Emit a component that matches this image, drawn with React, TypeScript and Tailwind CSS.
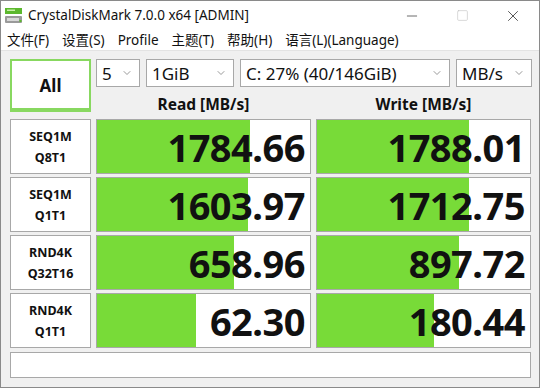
import { ChevronDown, Minus, Square, X } from "lucide-react";

const rows = [
  { a: "SEQ1M", b: "Q8T1", read: "1784.66", rw: 153, write: "1788.01", ww: 152 },
  { a: "SEQ1M", b: "Q1T1", read: "1603.97", rw: 151, write: "1712.75", ww: 152 },
  { a: "RND4K", b: "Q32T16", read: "658.96", rw: 137, write: "897.72", ww: 142 },
  { a: "RND4K", b: "Q1T1", read: "62.30", rw: 99, write: "180.44", ww: 117 },
];

const menu = ["文件(F)", "设置(S)", "Profile", "主题(T)", "帮助(H)", "语言(L)(Language)"];

const Combo = ({ text, w }: { text: string; w: string }) => (
  <div className={`${w} h-[28px] bg-white border border-[#a8a8a8] flex items-center justify-between pl-[5px] pr-[6px]`}>
    <span className="text-[17px] leading-none text-[#111]">{text}</span>
    <ChevronDown className="w-3 h-3 text-[#777]" strokeWidth={1.5} />
  </div>
);

const Cell = ({ value, fill }: { value: string; fill: number }) => (
  <div className="relative w-[215px] h-[55px] bg-white border border-[#a8a8a8] overflow-hidden">
    <div className="absolute left-0 top-0 bottom-0 bg-[#78db38]" style={{ width: fill }} />
    <span className="absolute right-[5px] top-[4px] text-[38px] leading-[46px] font-bold text-[#111] tracking-[-0.5px]">
      {value}
    </span>
  </div>
);

const App = () => {
  return (
    <div
      className="w-[540px] h-[388px] bg-[#f0f0f0] border border-[#8a8a8a] flex flex-col overflow-hidden"
      style={{ fontFamily: '"Noto Sans", "Noto Sans CJK SC", sans-serif' }}
    >
      <div className="h-[29px] bg-white flex items-center">
        <svg className="ml-[3px] w-[19px] h-[19px]" viewBox="0 0 19 19">
          <rect x="1" y="2" width="17" height="6" fill="#5cb82e" />
          <rect x="3" y="3.5" width="8" height="1.5" fill="#c8f0a8" />
          <rect x="1" y="10" width="17" height="7" rx="1" fill="#9a9a9a" />
          <rect x="3" y="12" width="12" height="3" fill="#d8d8d8" />
          <rect x="15.5" y="14" width="2" height="2" fill="#5cb82e" />
        </svg>
        <span className="ml-[5px] text-[13.5px] text-[#111]">CrystalDiskMark 7.0.0 x64 [ADMIN]</span>
        <div className="ml-auto flex items-center">
          <div className="w-[50px] flex justify-center"><Minus className="w-4 h-4 text-[#222]" strokeWidth={1} /></div>
          <div className="w-[50px] flex justify-center"><Square className="w-[13px] h-[13px] text-[#bbb]" strokeWidth={1} /></div>
          <div className="w-[52px] flex justify-center"><X className="w-[18px] h-[18px] text-[#222]" strokeWidth={1} /></div>
        </div>
      </div>
      <div className="h-[21px] bg-white flex items-center gap-[13px] pl-[6px] text-[13.5px] text-[#111] border-b border-[#e3e3e3]">
        {menu.map((m) => (
          <span key={m}>{m}</span>
        ))}
      </div>
      <div className="pl-[9px] pt-[8px] flex flex-col">
        <div className="flex gap-[5px] mb-[5px]">
          <div className="w-[81px] h-[53px] pt-[3px] bg-white border-2 border-[#88d860] border-b-[4px] flex items-center justify-center">
            <span className="text-[17px] font-bold text-[#111]">All</span>
          </div>
          <div className="flex flex-col">
            <div className="flex gap-[6px]">
              <Combo text="5" w="w-[44px]" />
              <Combo text="1GiB" w="w-[88px]" />
              <Combo text="C: 27% (40/146GiB)" w="w-[210px]" />
              <Combo text="MB/s" w="w-[76px]" />
            </div>
            <div className="flex gap-[5px] mt-[7px]">
              <div className="w-[215px] text-center text-[15.5px] font-bold leading-[20px] text-[#111]">Read [MB/s]</div>
              <div className="w-[215px] text-center text-[15.5px] font-bold leading-[20px] text-[#111]">Write [MB/s]</div>
            </div>
          </div>
        </div>
        <div className="flex flex-col gap-[3px]">
          {rows.map((r, i) => (
            <div key={i} className="flex gap-[5px]">
              <div className="w-[81px] h-[55px] bg-white border border-[#a8a8a8] flex flex-col items-center justify-center text-[12.5px] font-bold leading-[21px] text-[#111]">
                <span>{r.a}</span>
                <span>{r.b}</span>
              </div>
              <Cell value={r.read} fill={r.rw} />
              <Cell value={r.write} fill={r.ww} />
            </div>
          ))}
          <div className="w-[521px] h-[26px] mt-[1px] bg-white border border-[#a8a8a8]" />
        </div>
      </div>
    </div>
  );
};

export default App;
